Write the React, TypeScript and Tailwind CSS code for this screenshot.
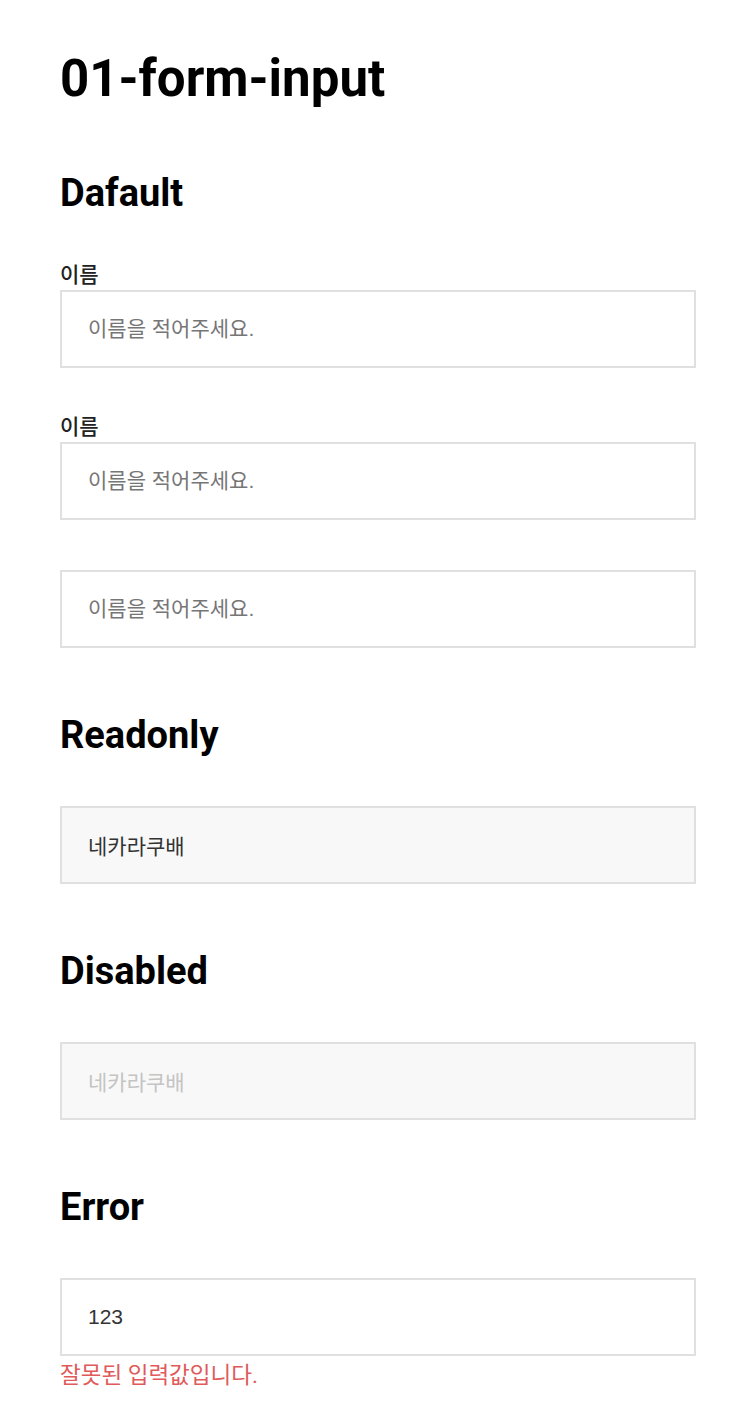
import React from "react";

const ko = "font-['Roboto','Noto_Sans_CJK_KR',sans-serif]";
const inputBase =
  "block w-full h-[78px] border-2 border-[#e0e0e0] px-[26px] text-[21px] outline-none placeholder:text-[#767676] font-['Liberation_Sans','Noto_Sans_CJK_KR',sans-serif]";

function Label({ children, className = "" }: { children: React.ReactNode; className?: string }) {
  return (
    <label className={`block h-[24px] leading-[24px] text-[21px] font-medium text-[#222] mb-[3px] ${ko} ${className}`}>
      {children}
    </label>
  );
}

function Heading({ children, className = "" }: { children: React.ReactNode; className?: string }) {
  return <h2 className={`text-[38px] leading-none font-bold text-black ${className}`}>{children}</h2>;
}

export default function App() {
  return (
    <div className="min-h-[1422px] w-[752px] bg-white pl-[60px] pr-[56px] pt-[53px] pb-[30px] font-['Roboto',sans-serif]">
      <h1 className="text-[51px] leading-none font-bold text-black">01-form-input</h1>

      <Heading className="mt-[70px]">Dafault</Heading>
      <Label className="mt-[51px]">이름</Label>
      <input className={`${inputBase} bg-white text-[#333]`} placeholder="이름을 적어주세요." />

      <Label className="mt-[47px]">이름</Label>
      <input className={`${inputBase} bg-white text-[#333]`} placeholder="이름을 적어주세요." />

      <input className={`${inputBase} mt-[50px] bg-white text-[#333]`} placeholder="이름을 적어주세요." />

      <Heading className="mt-[68px]">Readonly</Heading>
      <input className={`${inputBase} mt-[52px] bg-[#f8f8f8] text-[#333]`} value="네카라쿠배" readOnly />

      <Heading className="mt-[68px]">Disabled</Heading>
      <input className={`${inputBase} mt-[52px] bg-[#f8f8f8] text-[#c4c4c4]`} value="네카라쿠배" disabled />

      <Heading className="mt-[68px]">Error</Heading>
      <input className={`${inputBase} mt-[52px] bg-white text-[#333]`} defaultValue="123" />
      <p className={`mt-[5px] text-[22.5px] leading-[28px] text-[#e05a5a] ${ko}`}>잘못된 입력값입니다.</p>
    </div>
  );
}
